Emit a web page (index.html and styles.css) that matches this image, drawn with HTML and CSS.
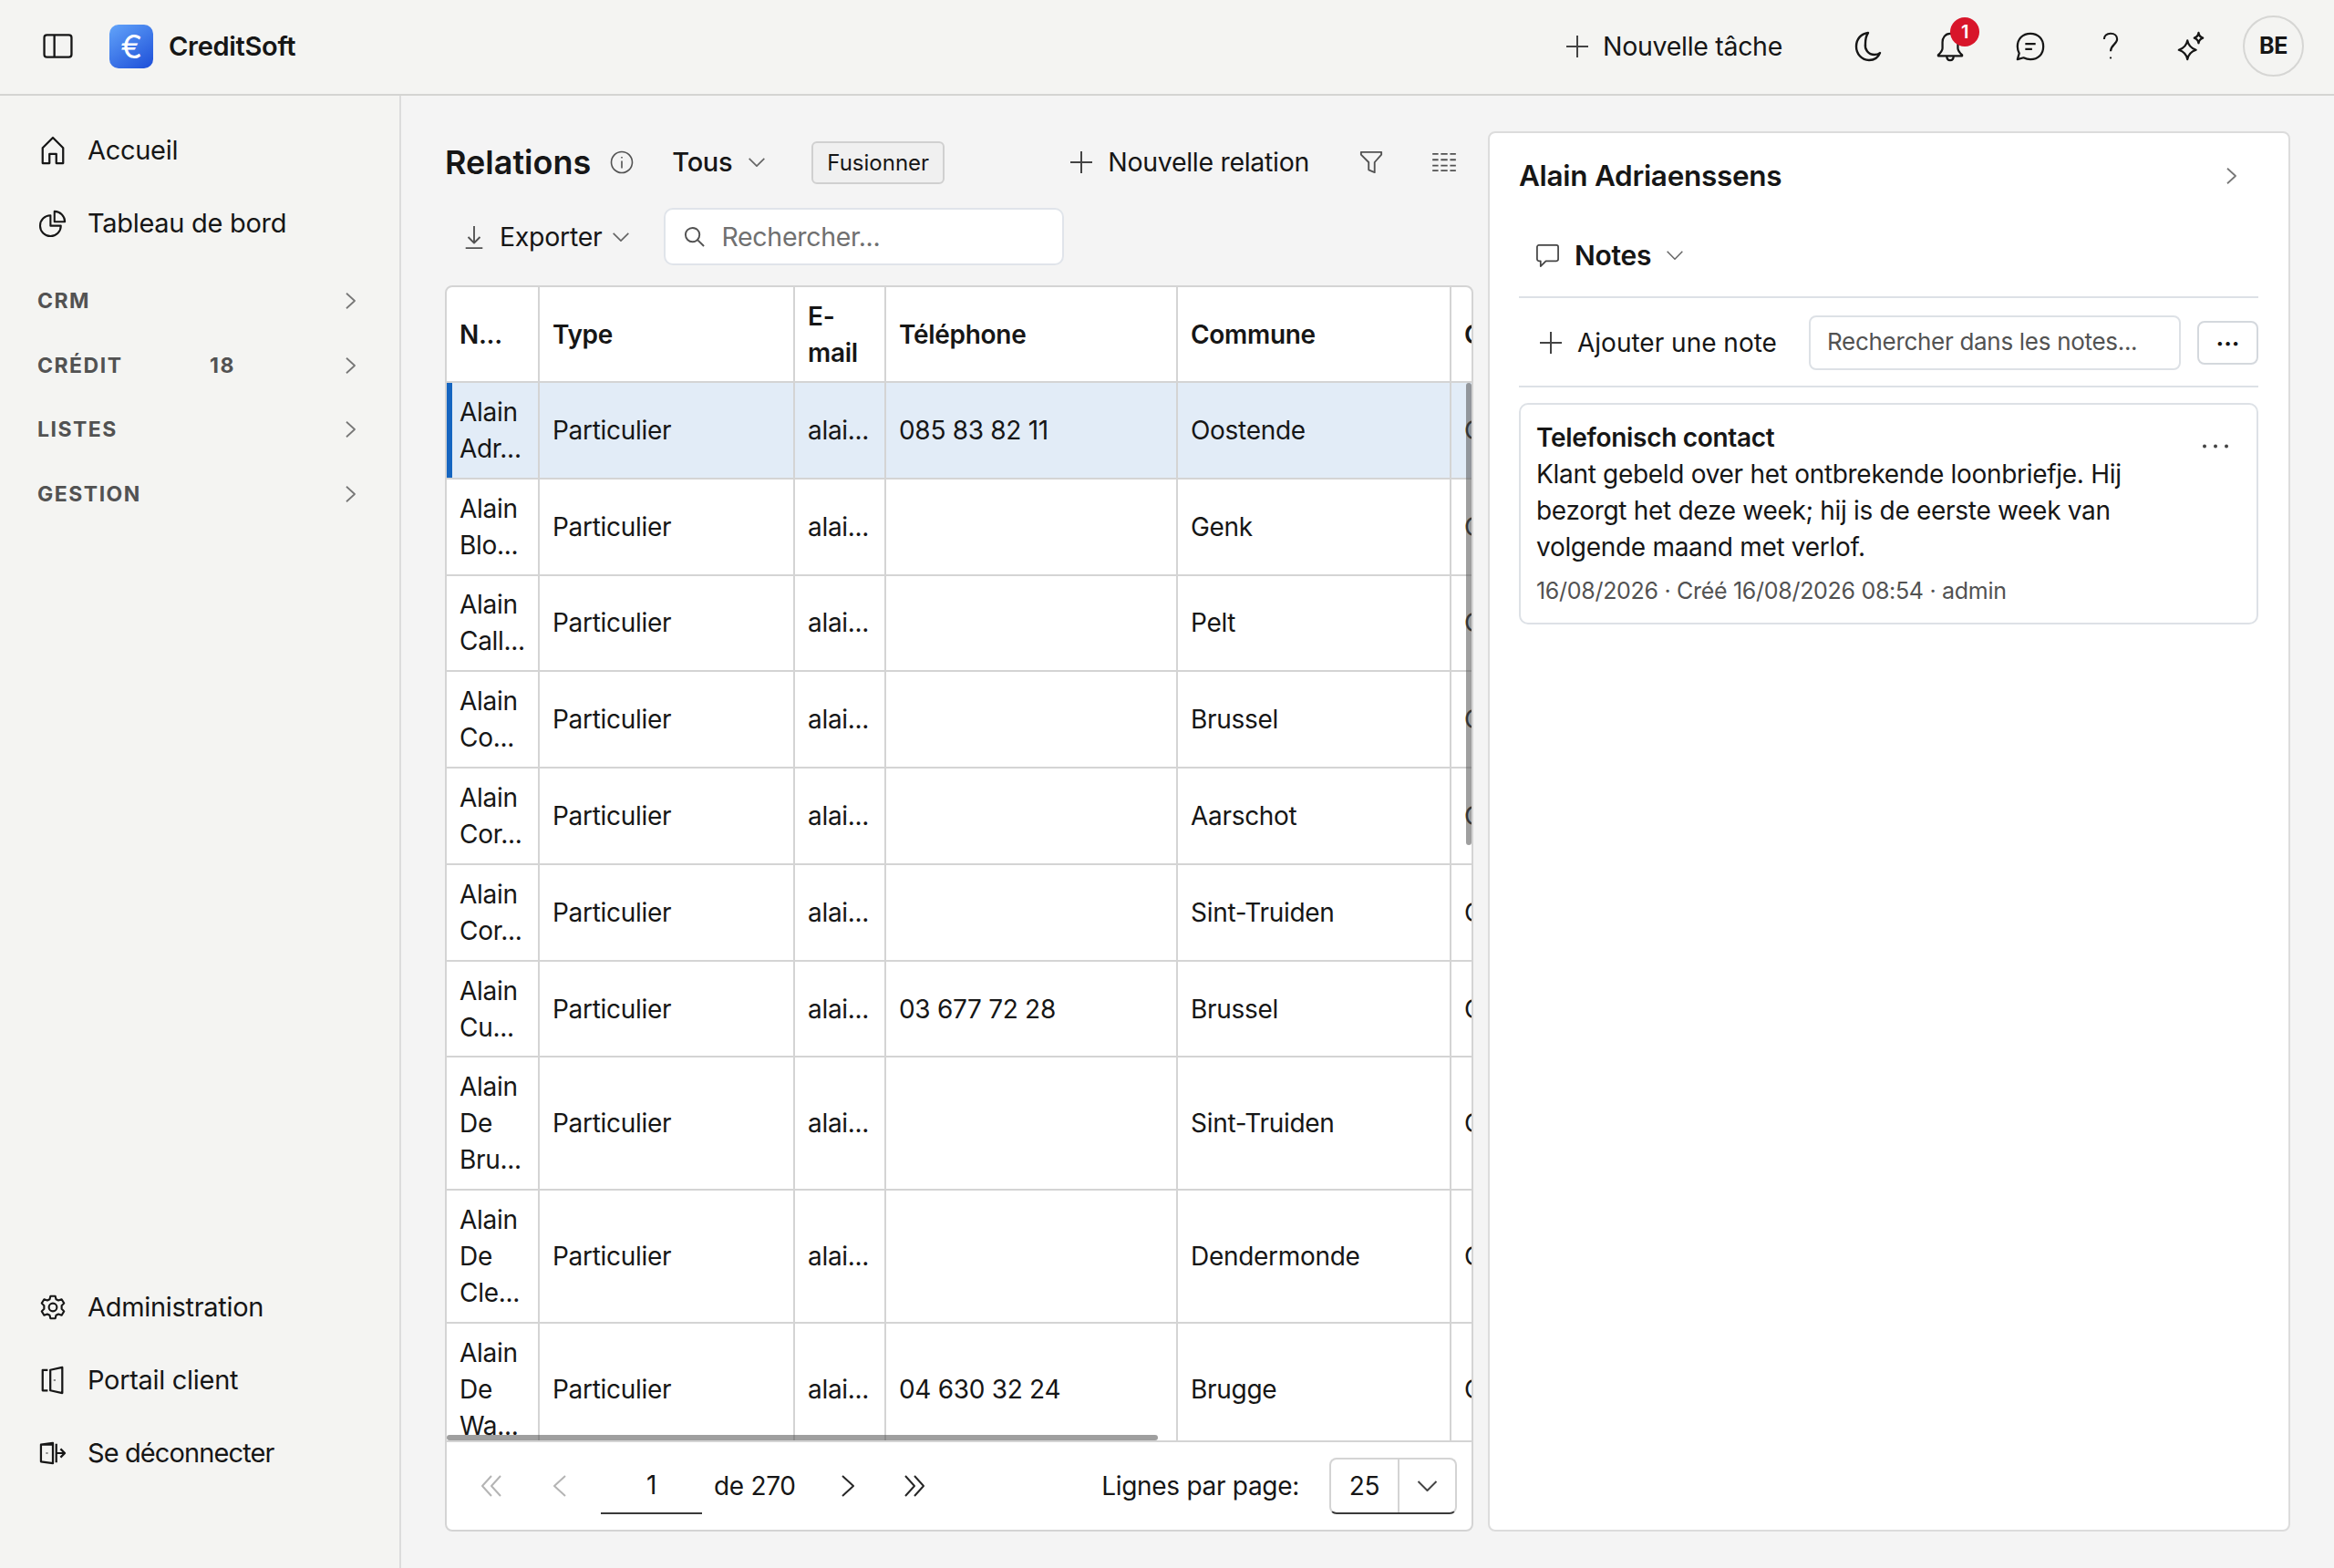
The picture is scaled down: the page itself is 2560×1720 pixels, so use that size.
FILE: index.html
```html
<!DOCTYPE html>
<html lang="fr">

<head>
    <meta charset="UTF-8">
    <title>CreditSoft - Relations</title>
    <link rel="stylesheet" href="styles.css">
</head>

<body>
    <svg class="sprite" aria-hidden="true">
        <symbol id="i-right" viewBox="0 0 14 24"><path d="M1 1l12 11L1 23"/></symbol>
        <symbol id="i-left" viewBox="0 0 14 24"><path d="M13 1L1 12l12 11"/></symbol>
        <symbol id="i-down" viewBox="0 0 24 12"><path d="M2 1l10 10L22 1"/></symbol>
        <symbol id="i-plus" viewBox="0 0 24 24"><path d="M12 0v24M0 12h24"/></symbol>
        <symbol id="i-first" viewBox="0 0 24 24"><path d="M12 1L2 12l10 11M22 1L12 12l10 11"/></symbol>
        <symbol id="i-last" viewBox="0 0 24 24"><path d="M12 1l10 11-10 11M2 1l10 11L2 23"/></symbol>
    </svg>

    <header class="topbar">
        <svg class="icon panel-toggle" viewBox="0 0 34 28"><rect x="1.5" y="1.5" width="31" height="25" rx="3"/><path d="M13 1.5v25"/></svg>
        <div class="logo">€</div>
        <div class="brand">CreditSoft</div>
        <div class="top-task">
            <svg class="icon plus"><use href="#i-plus"/></svg>
            <span>Nouvelle tâche</span>
        </div>
        <svg class="icon top-moon" viewBox="0 0 30 34"><path d="M15 2C7 3 2 9 2 17c0 8 6 15 14 15 6 0 10-3 12-8-2 2-4 2-6 2-7 0-11-6-10-12 0-5 1-9 3-12z"/></svg>
        <div class="top-bell">
            <svg class="icon" viewBox="0 0 32 36"><path d="M16 3c-6 0-9 5-9 10v7c0 3-2 5-5 8v1h28v-1c-3-3-5-5-5-8v-7c0-5-3-10-9-10zM12 29c0 7 8 7 8 0"/></svg>
            <span class="badge">1</span>
        </div>
        <svg class="icon top-chat" viewBox="0 0 36 36"><path d="M18 3C9 3 3 9 3 18c0 3 1 6 2 8l-2 7 7-2c2 1 5 2 8 2 9 0 15-6 15-15S27 3 18 3z"/><path d="M12 15h12M12 21h8"/></svg>
        <svg class="icon top-help" viewBox="0 0 20 36"><path d="M2 9c0-4 3-7 8-7s8 3 8 7c0 6-8 7-8 15"/><path d="M10 31v2"/></svg>
        <svg class="icon top-spark" viewBox="0 0 34 36"><path d="M13 11c1 6 4 9 10 11-6 2-9 5-10 11-1-6-4-9-10-11 6-2 9-5 10-11zM26 2c.5 3 2 5 5 6-3 1-4.500 3-5 6-.5-3-2-5-5-6 3-1 4.500-3 5-6z"/></svg>
        <div class="avatar">BE</div>
    </header>

    <div class="app-body">
        <nav class="sidebar">
            <a class="nav-item">
                <svg class="icon" viewBox="0 0 28 32"><path d="M2 13L14 1l12 12v18h-8V20h-8v11H2z"/></svg>
                <span>Accueil</span>
            </a>
            <a class="nav-item">
                <svg class="icon" viewBox="0 0 32 32"><path d="M13 6A13 13 0 1 0 26 19H13z"/><path d="M18 1a13 13 0 0 1 13 13H18z"/></svg>
                <span>Tableau de bord</span>
            </a>

            <div class="nav-sections">
                <div class="section-row"><span class="section-label">CRM</span><svg class="icon chevron-sm"><use href="#i-right"/></svg></div>
                <div class="section-row"><span class="section-label">CRÉDIT</span><span class="section-count">18</span><svg class="icon chevron-sm"><use href="#i-right"/></svg></div>
                <div class="section-row"><span class="section-label">LISTES</span><svg class="icon chevron-sm"><use href="#i-right"/></svg></div>
                <div class="section-row"><span class="section-label">GESTION</span><svg class="icon chevron-sm"><use href="#i-right"/></svg></div>
            </div>

            <div class="nav-bottom">
                <a class="nav-item">
                    <svg class="icon" viewBox="0 0 32 32"><path d="M13 2h6l1 4 3 1.500 4-1.500 3 5-3 3v4l3 3-3 5-4-1.500-3 1.500-1 4h-6l-1-4-3-1.500-4 1.500-3-5 3-3v-4l-3-3 3-5 4 1.500 3-1.500z"/><circle cx="16" cy="16" r="5"/></svg>
                    <span>Administration</span>
                </a>
                <a class="nav-item">
                    <svg class="icon" viewBox="0 0 28 32"><path d="M8 4H2v24h6M11 4l14-3v30l-14-3z"/><path d="M16 15.500v1"/></svg>
                    <span>Portail client</span>
                </a>
                <a class="nav-item nav-logout">
                    <svg class="icon" viewBox="1 2 30 24"><path d="M2 4l14-2v24L2 24zM2 4h14M20 3v22M20 14h10M25 9l5 5-5 5"/><path d="M9 13.500v1"/></svg>
                    <span>Se déconnecter</span>
                </a>
            </div>
        </nav>

        <main class="content">
            <section class="list-col">
                <div class="list-head">
                    <h1>Relations</h1>
                    <svg class="icon info" viewBox="0 0 26 26"><circle cx="13" cy="13" r="11.500"/><path d="M13 11.500v8M13 7v1.500"/></svg>
                    <span class="view-select">Tous</span>
                    <svg class="icon chevron-dn"><use href="#i-down"/></svg>
                    <button class="merge-btn">Fusionner</button>
                    <div class="new-rel">
                        <svg class="icon plus"><use href="#i-plus"/></svg>
                        <span>Nouvelle relation</span>
                    </div>
                    <svg class="icon filter" viewBox="0 0 28 28"><path d="M2 2h24v3l-8 9v12l-7-3v-9L2 5z"/></svg>
                    <svg class="icon grid-ico" viewBox="0 0 28 24"><path d="M0 2h7M10 2h8M21 2h7M0 9h7M10 9h8M21 9h7M0 16h7M10 16h8M21 16h7M0 22h7M10 22h8M21 22h7"/></svg>
                </div>

                <div class="list-tools">
                    <svg class="icon export-ico" viewBox="0 0 20 28"><path d="M10 1v20M3 14l7 7 7-7M0 27h20"/></svg>
                    <span class="export-label">Exporter</span>
                    <svg class="icon chevron-dn"><use href="#i-down"/></svg>
                    <div class="search-box">
                        <svg class="icon" viewBox="0 0 24 24"><circle cx="10" cy="10" r="8"/><path d="M16 16l7 7"/></svg>
                        <span>Rechercher...</span>
                    </div>
                </div>

                <div class="table-card">
                    <div class="table-scroll">
                        <table class="rel-table">
                            <colgroup>
                                <col class="c-name"><col class="c-type"><col class="c-mail"><col class="c-tel"><col class="c-city"><col class="c-more">
                            </colgroup>
                            <thead>
                                <tr><th>N...</th><th>Type</th><th>E-mail</th><th>Téléphone</th><th>Commune</th><th>Code</th></tr>
                            </thead>
                            <tbody>
                                <tr class="selected"><td>Alain Adr...</td><td>Particulier</td><td>alai...</td><td>085 83 82 11</td><td>Oostende</td><td>Oui</td></tr>
                                <tr><td>Alain Blo...</td><td>Particulier</td><td>alai...</td><td></td><td>Genk</td><td>Oui</td></tr>
                                <tr><td>Alain Call...</td><td>Particulier</td><td>alai...</td><td></td><td>Pelt</td><td>Oui</td></tr>
                                <tr><td>Alain Co...</td><td>Particulier</td><td>alai...</td><td></td><td>Brussel</td><td>Oui</td></tr>
                                <tr><td>Alain Cor...</td><td>Particulier</td><td>alai...</td><td></td><td>Aarschot</td><td>Oui</td></tr>
                                <tr><td>Alain Cor...</td><td>Particulier</td><td>alai...</td><td></td><td>Sint-Truiden</td><td>Oui</td></tr>
                                <tr><td>Alain Cu...</td><td>Particulier</td><td>alai...</td><td>03 677 72 28</td><td>Brussel</td><td>Oui</td></tr>
                                <tr><td>Alain De Bru...</td><td>Particulier</td><td>alai...</td><td></td><td>Sint-Truiden</td><td>Oui</td></tr>
                                <tr><td>Alain De Cle...</td><td>Particulier</td><td>alai...</td><td></td><td>Dendermonde</td><td>Oui</td></tr>
                                <tr><td>Alain De Wa...</td><td>Particulier</td><td>alai...</td><td>04 630 32 24</td><td>Brugge</td><td>Oui</td></tr>
                            </tbody>
                        </table>
                        <div class="scroll-v"></div>
                        <div class="scroll-h"></div>
                    </div>

                    <div class="pager">
                        <svg class="icon pg-double muted"><use href="#i-first"/></svg>
                        <svg class="icon pg-single muted"><use href="#i-left"/></svg>
                        <div class="page-input">1</div>
                        <span class="page-total">de 270</span>
                        <svg class="icon pg-single pg-next"><use href="#i-right"/></svg>
                        <svg class="icon pg-double pg-last"><use href="#i-last"/></svg>
                        <span class="rows-label">Lignes par page:</span>
                        <div class="rows-select">
                            <span class="rows-value">25</span>
                            <span class="rows-arrow"><svg class="icon"><use href="#i-down"/></svg></span>
                        </div>
                    </div>
                </div>
            </section>

            <aside class="detail">
                <div class="detail-head">
                    <h2>Alain Adriaenssens</h2>
                    <svg class="icon chevron-sm"><use href="#i-right"/></svg>
                </div>

                <div class="notes-tab">
                    <svg class="icon" viewBox="0 0 28 28"><path d="M4 2h20a2 2 0 0 1 2 2v14a2 2 0 0 1-2 2H12l-6 6v-6H4a2 2 0 0 1-2-2V4a2 2 0 0 1 2-2z"/></svg>
                    <span>Notes</span>
                    <svg class="icon chevron-dn"><use href="#i-down"/></svg>
                </div>

                <div class="notes-tools">
                    <svg class="icon plus"><use href="#i-plus"/></svg>
                    <span class="add-note">Ajouter une note</span>
                    <div class="notes-search">Rechercher dans les notes...</div>
                    <button class="more-btn">···</button>
                </div>

                <article class="note-card">
                    <div class="note-title">Telefonisch contact</div>
                    <p class="note-text">Klant gebeld over het ontbrekende loonbriefje. Hij bezorgt het deze week; hij is de eerste week van volgende maand met verlof.</p>
                    <div class="note-meta">16/08/2026 · Créé 16/08/2026 08:54 · admin</div>
                    <svg class="note-menu" viewBox="0 0 30 5"><circle cx="3" cy="2.500" r="2"/><circle cx="15" cy="2.500" r="2"/><circle cx="27" cy="2.500" r="2"/></svg>
                </article>
            </aside>
        </main>
    </div>
</body>

</html>
```
FILE: styles.css
```css
* {
    box-sizing: border-box;
}

html,
body {
    height: 100%;
}

body {
    margin: 0;
    display: flex;
    flex-direction: column;
    font-family: 'Inter', 'Liberation Sans', sans-serif;
    font-size: 28px;
    line-height: 40px;
    letter-spacing: -0.3px;
    color: #161616;
    background: #f4f4f4;
    overflow: hidden;
}

.sprite {
    display: none;
}

.icon {
    display: block;
    flex: none;
    fill: none;
    stroke: #161616;
    stroke-width: 2.4;
    stroke-linejoin: round;
    overflow: visible;
}

.plus {
    width: 24px;
    height: 24px;
    stroke: #444;
    stroke-width: 2;
}

.chevron-sm {
    width: 11px;
    height: 18px;
    stroke: #777;
}

.chevron-dn {
    width: 20px;
    height: 10px;
    stroke: #666;
    stroke-width: 2;
}

/* top bar */
.topbar {
    height: 105px;
    flex: none;
    display: flex;
    align-items: center;
    padding: 0 33px 2px 47px;
    background: #f4f4f2;
    border-bottom: 2px solid #d4d4d2;
}

.panel-toggle {
    width: 33px;
    height: 27px;
}

.logo {
    width: 48px;
    height: 48px;
    margin-left: 40px;
    border-radius: 10px;
    background: linear-gradient(145deg, #62a4fa, #1d4ed8);
    color: #fff;
    font-size: 36px;
    line-height: 48px;
    text-align: center;
}

.brand {
    margin-left: 17px;
    font-size: 29px;
    font-weight: 600;
}

.top-task {
    display: flex;
    align-items: center;
    gap: 16px;
    margin-left: auto;
    font-size: 28.5px;
}

.top-moon {
    width: 30px;
    height: 34px;
    margin-left: 79px;
}

.top-bell {
    position: relative;
    margin-left: 60px;
}

.top-bell .icon {
    width: 30px;
    height: 36px;
}

.badge {
    position: absolute;
    top: -14px;
    left: 15px;
    width: 32px;
    height: 32px;
    border-radius: 50%;
    background: #d8152a;
    color: #fff;
    font-size: 20px;
    font-weight: 600;
    line-height: 32px;
    text-align: center;
}

.top-chat {
    width: 34px;
    height: 34px;
    margin-left: 56px;
}

.top-help {
    width: 18px;
    height: 32px;
    margin-left: 62px;
}

.top-spark {
    width: 32px;
    height: 34px;
    margin-left: 63px;
}

.avatar {
    width: 67px;
    height: 67px;
    margin-left: 41px;
    border: 2px solid #d6d6d4;
    border-radius: 50%;
    font-size: 25px;
    font-weight: 700;
    line-height: 63px;
    text-align: center;
}

/* layout */
.app-body {
    flex: 1;
    min-height: 0;
    display: flex;
}

.sidebar {
    width: 440px;
    flex: none;
    display: flex;
    flex-direction: column;
    padding-top: 20px;
    background: #f4f4f2;
    border-right: 2px solid #dcdcdc;
}

.nav-item {
    height: 80px;
    display: flex;
    align-items: center;
    gap: 24px;
    padding-left: 44px;
    font-size: 29px;
}

.nav-item .icon {
    width: 28px;
    height: 30px;
}

.nav-logout {
    letter-spacing: -0.9px;
}

.nav-sections {
    margin-top: 10px;
}

.section-row {
    height: 70.5px;
    display: flex;
    align-items: center;
    padding: 0 48px 0 41px;
    color: #525252;
    font-size: 23px;
    font-weight: 700;
    letter-spacing: 1.5px;
}

.section-label {
    width: 189px;
}

.section-row .chevron-sm {
    margin-left: auto;
}

.nav-bottom {
    margin-top: auto;
    padding-bottom: 86px;
}

.content {
    flex: 1;
    min-width: 0;
    display: flex;
    gap: 16px;
    padding: 39px 48px 40px;
}

/* list column */
.list-col {
    width: 1128px;
    flex: none;
    display: flex;
    flex-direction: column;
}

.list-head {
    height: 68px;
    flex: none;
    display: flex;
    align-items: center;
    padding-right: 18px;
}

h1 {
    margin: 0;
    font-size: 36px;
    font-weight: 600;
    letter-spacing: 0;
}

.info {
    width: 26px;
    height: 26px;
    margin-left: 21px;
    stroke: #525252;
    stroke-width: 1.6;
}

.view-select {
    margin-left: 42px;
    margin-right: 17px;
    font-size: 29px;
    font-weight: 500;
}

.merge-btn {
    height: 47px;
    margin-left: 50px;
    padding: 0 15px;
    border: 2px solid #d0d0d0;
    border-radius: 6px;
    background: #f0f0f0;
    color: #161616;
    font-family: inherit;
    font-size: 24px;
}

.new-rel {
    display: flex;
    align-items: center;
    gap: 17px;
    margin-left: auto;
    font-size: 28.5px;
}

.filter {
    width: 26px;
    height: 28px;
    margin-left: 55px;
    stroke: #525252;
    stroke-width: 2;
}

.grid-ico {
    width: 28px;
    height: 22px;
    margin-left: 53px;
    stroke: #525252;
    stroke-width: 2;
}

.list-tools {
    height: 63px;
    flex: none;
    display: flex;
    align-items: center;
    margin-top: 16px;
    padding-left: 22px;
}

.export-ico {
    width: 20px;
    height: 26px;
    stroke: #525252;
    stroke-width: 2;
}

.export-label {
    margin-left: 18px;
    margin-right: 11px;
    font-size: 28.5px;
}

.search-box {
    width: 439px;
    height: 63px;
    display: flex;
    align-items: center;
    gap: 18px;
    margin-left: 37px;
    padding-left: 20px;
    border: 2px solid #e0e4ea;
    border-radius: 10px;
    background: #fff;
    color: #707070;
    font-size: 28.5px;
}

.search-box .icon {
    width: 23px;
    height: 23px;
    stroke: #525252;
    stroke-width: 2;
}

/* table */
.table-card {
    flex: 1;
    min-height: 0;
    display: flex;
    flex-direction: column;
    margin-top: 22px;
    border: 2px solid #d4d4d4;
    border-radius: 8px;
    background: #fff;
    overflow: hidden;
}

.table-scroll {
    position: relative;
    flex: 1;
    min-height: 0;
    overflow: hidden;
    border-bottom: 2px solid #d4d4d4;
}

.rel-table {
    width: 1302px;
    table-layout: fixed;
    border-collapse: separate;
    border-spacing: 0;
}

.c-name { width: 102px; }
.c-type { width: 280px; }
.c-mail { width: 100px; }
.c-tel { width: 320px; }
.c-city { width: 300px; }
.c-more { width: 200px; }

.rel-table th,
.rel-table td {
    padding: 11.9px 13px 11.9px 14px;
    border-right: 2px solid #d4d4d4;
    border-bottom: 2px solid #d4d4d4;
    text-align: left;
    vertical-align: middle;
}

.rel-table th {
    padding-top: 11.5px;
    padding-bottom: 11.5px;
    font-weight: 600;
}

.selected td {
    background: #e2ecf7;
}

.selected td:first-child {
    box-shadow: inset 6px 0 0 #1565c0;
}

.scroll-v {
    position: absolute;
    top: 105px;
    right: 0;
    width: 6px;
    height: 507px;
    border-radius: 3px;
    background: rgba(80, 80, 80, 0.55);
}

.scroll-h {
    position: absolute;
    left: 0;
    bottom: 0;
    width: 780px;
    height: 6px;
    border-radius: 3px;
    background: rgba(80, 80, 80, 0.55);
}

.pager {
    height: 96px;
    flex: none;
    display: flex;
    align-items: center;
    padding: 0 16px 0 37px;
}

.pg-double {
    width: 24px;
    height: 24px;
    stroke-width: 2;
}

.pg-single {
    width: 14px;
    height: 24px;
    margin-left: 56px;
    stroke-width: 2;
}

.muted {
    stroke: #b4b4b4;
}

.page-input {
    width: 111px;
    height: 62px;
    margin-left: 38px;
    border-bottom: 2px solid #3a3a3a;
    line-height: 60px;
    text-align: center;
}

.page-total {
    margin-left: 13px;
}

.pg-next {
    margin-left: 50px;
    stroke: #262626;
}

.pg-last {
    margin-left: 54px;
    stroke: #262626;
}

.rows-label {
    margin-left: auto;
}

.rows-select {
    width: 140px;
    height: 62px;
    display: flex;
    margin-left: 33px;
    border: 2px solid #d4d4d4;
    border-bottom-color: #3a3a3a;
    border-radius: 8px;
}

.rows-value {
    width: 75px;
    border-right: 2px solid #d4d4d4;
    line-height: 58px;
    text-align: center;
}

.rows-arrow {
    flex: 1;
    display: flex;
    align-items: center;
    justify-content: center;
}

.rows-arrow .icon {
    width: 25px;
    height: 12px;
    stroke: #444;
    stroke-width: 2;
}

/* detail panel */
.detail {
    flex: 1;
    min-width: 0;
    padding: 0 33px 0 32px;
    border: 2px solid #dcdcdc;
    border-radius: 8px;
    background: #fff;
}

.detail-head {
    height: 94px;
    display: flex;
    align-items: center;
    justify-content: space-between;
    padding-right: 24px;
}

h2 {
    margin: 0;
    font-size: 31.500px;
    font-weight: 600;
}

.notes-tab {
    height: 87px;
    display: flex;
    align-items: center;
    padding: 0 0 5px 18px;
    border-bottom: 2px solid #dde1e6;
    font-size: 30px;
    font-weight: 600;
}

.notes-tab .icon {
    width: 27px;
    height: 27px;
    margin-right: 16px;
    stroke: #444;
    stroke-width: 1.8;
}

.notes-tab .chevron-dn {
    width: 20px;
    height: 10px;
    margin-left: 16px;
    margin-right: 0;
    stroke: #666;
}

.notes-tools {
    height: 98px;
    display: flex;
    align-items: center;
    padding: 2px 0 0 23px;
    border-bottom: 2px solid #dde1e6;
}

.add-note {
    margin-left: 17px;
    letter-spacing: 0;
}

.notes-search {
    width: 408px;
    height: 60px;
    margin-left: auto;
    padding-left: 18px;
    border: 2px solid #dde1e6;
    border-radius: 8px;
    color: #525252;
    font-size: 26px;
    line-height: 54px;
}

.more-btn {
    width: 67px;
    height: 48px;
    margin-left: 18px;
    padding: 0;
    border: 2px solid #d4d8dd;
    border-radius: 8px;
    background: #fff;
    color: #161616;
    font-family: inherit;
    font-size: 26px;
    font-weight: 700;
}

.note-card {
    position: relative;
    height: 243px;
    margin-top: 17px;
    padding: 16px 17px 0;
    border: 2px solid #dde1e6;
    border-radius: 10px;
}

.note-title {
    font-weight: 600;
}

.note-text {
    max-width: 700px;
    margin: 0;
}

.note-meta {
    margin-top: 8px;
    color: #525252;
    font-size: 25px;
}

.note-menu {
    position: absolute;
    top: 43px;
    right: 30px;
    width: 30px;
    height: 5px;
    fill: #444;
}
```
